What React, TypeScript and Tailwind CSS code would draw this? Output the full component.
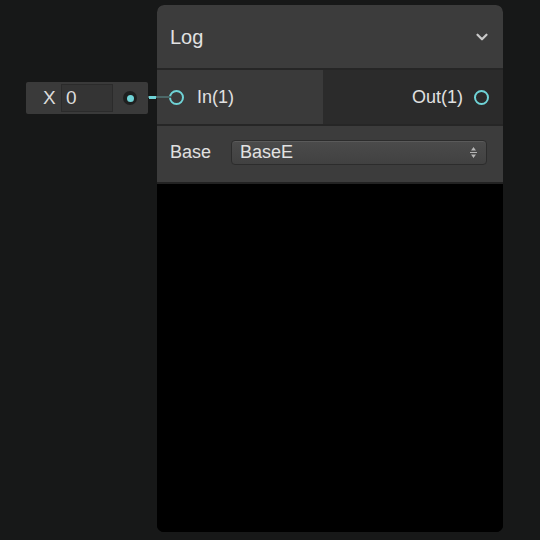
import { ChevronDown } from 'lucide-react';

const font = { fontFamily: '"Liberation Sans", Arial, sans-serif' };

function Port({ filled }: { filled?: boolean }) {
  return filled ? (
    <span className="flex h-[14px] w-[14px] items-center justify-center rounded-full bg-[#1e1f1f]">
      <span className="h-[7px] w-[7px] rounded-full bg-[#6fd3d6]" />
    </span>
  ) : (
    <span className="block h-[15px] w-[15px] rounded-full border-2 border-[#6fd3d6]" />
  );
}

function ValueNode() {
  return (
    <div className="absolute left-[26px] top-[82px] flex h-[32px] w-[122px] items-center rounded-[2px] bg-[#3a3a3a]">
      <span className="ml-[17px] w-[18px] text-[19px] text-[#dcdcdc]">X</span>
      <div className="flex h-[28px] w-[52px] items-center border border-[#2b2b2b] bg-[#343434] pl-[4px] text-[19px] text-[#dcdcdc]">
        0
      </div>
      <div className="ml-[10px]">
        <Port filled />
      </div>
    </div>
  );
}

function LogNode() {
  return (
    <div className="absolute left-[157px] top-[5px] flex h-[527px] w-[346px] flex-col overflow-hidden rounded-[7px] bg-black">
      <div className="flex h-[63px] items-center justify-between bg-[#3c3c3c] pl-[13px] pr-[12px]">
        <span className="text-[20px] text-[#e2e2e2]">Log</span>
        <ChevronDown size={18} strokeWidth={3} className="text-[#c8c8c8]" />
      </div>
      <div className="h-[2px] bg-[#262626]" />
      <div className="flex h-[54px]">
        <div className="flex w-[166px] items-center gap-[13px] bg-[#3a3a3a] pl-[12px]">
          <Port />
          <span className="text-[18px] text-[#e0e0e0]">In(1)</span>
        </div>
        <div className="flex flex-1 items-center justify-end gap-[11px] bg-[#2b2b2b] pr-[14px]">
          <span className="text-[18px] text-[#e0e0e0]">Out(1)</span>
          <Port />
        </div>
      </div>
      <div className="h-[2px] bg-[#262626]" />
      <div className="flex h-[56px] items-center bg-[#3c3c3c] pb-[4px] pl-[13px]">
        <span className="w-[61px] text-[18px] text-[#e0e0e0]">Base</span>
        <div className="flex h-[25px] w-[256px] items-center justify-between rounded-[4px] border border-[#2c2c2c] bg-gradient-to-b from-[#4b4b4b] to-[#414141] pl-[8px] pr-[9px] shadow-[inset_0_1px_0_#5a5a5a]">
          <span className="text-[18px] text-[#e2e2e2]">BaseE</span>
          <svg width="7" height="13" viewBox="0 0 7 13" className="text-[#b5b5b5]">
            <path d="M3.5 1 L6 4.5 H1 Z M1 8.5 H6 L3.5 12 Z" fill="currentColor" />
            <rect x="0" y="6" width="7" height="1" fill="currentColor" />
          </svg>
        </div>
      </div>
      <div className="h-[2px] bg-[#222]" />
      <div className="flex-1 bg-black" />
    </div>
  );
}

export default function App() {
  return (
    <div className="relative h-[540px] w-[540px] overflow-hidden bg-[#171818]" style={font}>
      {/* wire */}
      <div className="absolute left-[134px] top-[96px] h-[2px] w-[40px] bg-[#4c6868]" />
      <ValueNode />
      <div className="absolute left-[149px] top-[96px] h-[3px] w-[7px] bg-[#6fd3d6]" />
      <LogNode />
      <div className="absolute left-[157px] top-[96px] h-[2px] w-[14px] bg-[#4c6868]" />
    </div>
  );
}
